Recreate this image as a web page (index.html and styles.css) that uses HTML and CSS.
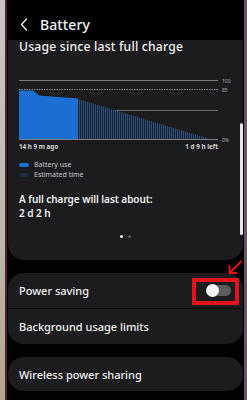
FILE: index.html
```html
<!DOCTYPE html>
<html>
<head>
<meta charset="utf-8">
<link rel="stylesheet" href="styles.css">
</head>
<body>
<div class="device">
  <header class="topbar">
    <svg class="back" width="8" height="13" viewBox="0 0 8 13"><polyline points="6.5,1 1.5,6.5 6.5,12" fill="none" stroke="#f2f2f2" stroke-width="1.3" stroke-linecap="round" stroke-linejoin="round"/></svg>
    <span class="title">Battery</span>
  </header>

  <section class="card usage">
    <div class="usage-title">Usage since last full charge</div>
    <svg class="chart" width="213" height="66" viewBox="0 0 213 66">
      <defs>
        <pattern id="est" width="2" height="4" patternUnits="userSpaceOnUse">
          <rect width="2" height="4" fill="#1a2130"/>
          <rect width="1" height="4" fill="#2e4f7a"/>
        </pattern>
      </defs>
      <line x1="0" y1="4.5" x2="199" y2="4.5" stroke="#7a7a7a" stroke-width="1"/>
      <line x1="0" y1="13.5" x2="199" y2="13.5" stroke="#8a8a8a" stroke-width="1" stroke-dasharray="1.5 1"/>
      <line x1="0" y1="34.5" x2="199" y2="34.5" stroke="#6a6a6a" stroke-width="1"/>
      <path d="M59,23 L191,63 L59,63 Z" fill="url(#est)"/>
      <path d="M0,63 L0,14.5 L14,14.5 L20,19.5 L59,22.5 L59,63 Z" fill="#1b6fd2"/>
      <line x1="0" y1="63.5" x2="199" y2="63.5" stroke="#7a7a7a" stroke-width="1"/>
      <text x="203" y="6.5" class="axis">100</text>
      <text x="203" y="15.5" class="axis">85</text>
      <text x="203" y="65.5" class="axis">0%</text>
    </svg>
    <div class="axis-row"><span>14 h 9 m ago</span><span>1 d 9 h left</span></div>
    <ul class="legend">
      <li><i class="pill pill-use"></i>Battery use</li>
      <li><i class="pill pill-est"></i>Estimated time</li>
    </ul>
    <div class="summary">
      <div>A full charge will last about:</div>
      <div>2 d 2 h</div>
    </div>
    <div class="dots"><i class="dot on"></i><i class="dot"></i></div>
  </section>

  <section class="card list">
    <div class="row">
      <span>Power saving</span>
      <span class="toggle"><i class="knob"></i></span>
    </div>
    <div class="divider"></div>
    <div class="row"><span>Background usage limits</span></div>
  </section>

  <section class="card list">
    <div class="row short"><span>Wireless power sharing</span></div>
  </section>

  <div class="scrollbar"></div>
  <div class="highlight"></div>
  <svg class="arrow" width="18" height="18" viewBox="0 0 18 18">
    <line x1="15" y1="2.5" x2="5" y2="12.5" stroke="#e3141b" stroke-width="2" stroke-linecap="round"/>
    <polyline points="3.5,7 3.5,14 10.5,14" fill="none" stroke="#e3141b" stroke-width="2" stroke-linecap="round" stroke-linejoin="round"/>
  </svg>
</div>
</body>
</html>
```

FILE: styles.css
```css
* { box-sizing: border-box; }

html, body {
  margin: 0;
  padding: 0;
}

body {
  width: 247px;
  height: 400px;
  overflow: hidden;
  background: linear-gradient(180deg, #c9c6c2 0%, #bdb7ae 60%, #b6a58e 100%);
  font-family: "Noto Sans", "Open Sans", sans-serif;
  color: #f2f2f2;
}

.device {
  position: relative;
  margin-left: 5px;
  width: 242px;
  height: 400px;
  background: #030203;
  border-left: 2px solid #4e2233;
  border-right: 3px solid #6d5462;
  overflow: hidden;
}

.topbar {
  height: 42px;
  display: flex;
  align-items: flex-start;
  padding: 18px 0 0 13px;
  gap: 12px;
  background: #000;
}

.title {
  font-size: 14px;
  line-height: 13px;
  font-weight: 500;
  letter-spacing: 0.1px;
}

.card {
  background: #1c1b1d;
  margin: 0 1px 0 1px;
  border-radius: 16px;
}

.usage {
  border-radius: 0 0 16px 16px;
  padding: 0 0 22px 11px;
}

.usage-title {
  font-size: 12.2px;
  line-height: 14px;
  height: 14px;
  margin-top: -2px;
  font-weight: 500;
  letter-spacing: 0.2px;
}

.chart {
  display: block;
  margin-top: 22px;
}

.axis {
  font-size: 5px;
  fill: #b0b0b0;
  font-family: "Noto Sans", sans-serif;
}

.axis-row {
  width: 199px;
  height: 10px;
  display: flex;
  justify-content: space-between;
  font-size: 6.3px;
  line-height: 10px;
  font-weight: 700;
  color: #d6d6d6;
}

.legend {
  list-style: none;
  margin: 8px 0 0 0;
  padding: 0;
}

.legend li {
  display: flex;
  align-items: center;
  height: 10px;
  font-size: 7px;
  line-height: 10px;
  color: #c9c9c9;
}

.pill {
  width: 10px;
  height: 4px;
  border-radius: 2px;
  margin-right: 5px;
}

.pill-use { background: #1b6fd2; }
.pill-est { background: #1e2b3e; }

.summary {
  margin-top: 12px;
  font-size: 10px;
  line-height: 14px;
  font-weight: 600;
  letter-spacing: -0.05px;
}

.dots {
  margin: 15px 11px 0 0;
  display: flex;
  justify-content: center;
  gap: 5px;
}

.dot {
  width: 3px;
  height: 3px;
  border-radius: 50%;
  background: #5a5a5c;
}

.dot.on { background: #eeeeee; }

.list { margin-top: 13px; }
.list + .list { margin-top: 13px; }

.row {
  height: 35px;
  display: flex;
  align-items: center;
  justify-content: space-between;
  padding: 0 0 0 11px;
  font-size: 11px;
  font-weight: 500;
}

.row.short { height: 34px; }

.divider {
  height: 1px;
  background: #0c0b0c;
}

.toggle {
  position: relative;
  width: 24px;
  height: 11px;
  margin-right: 12px;
  border-radius: 6px;
  background: #5c5c5e;
}

.knob {
  position: absolute;
  left: -1px;
  top: -1px;
  width: 13px;
  height: 13px;
  border-radius: 50%;
  background: #f4f4f4;
}

.scrollbar {
  position: absolute;
  left: 233px;
  top: 123px;
  width: 3px;
  height: 112px;
  border-radius: 2px;
  background: #e6e6e6;
}

.highlight {
  position: absolute;
  left: 185px;
  top: 278px;
  width: 47px;
  height: 27px;
  border: 4px solid #e3141b;
}

.arrow {
  position: absolute;
  left: 219px;
  top: 259px;
}
```
